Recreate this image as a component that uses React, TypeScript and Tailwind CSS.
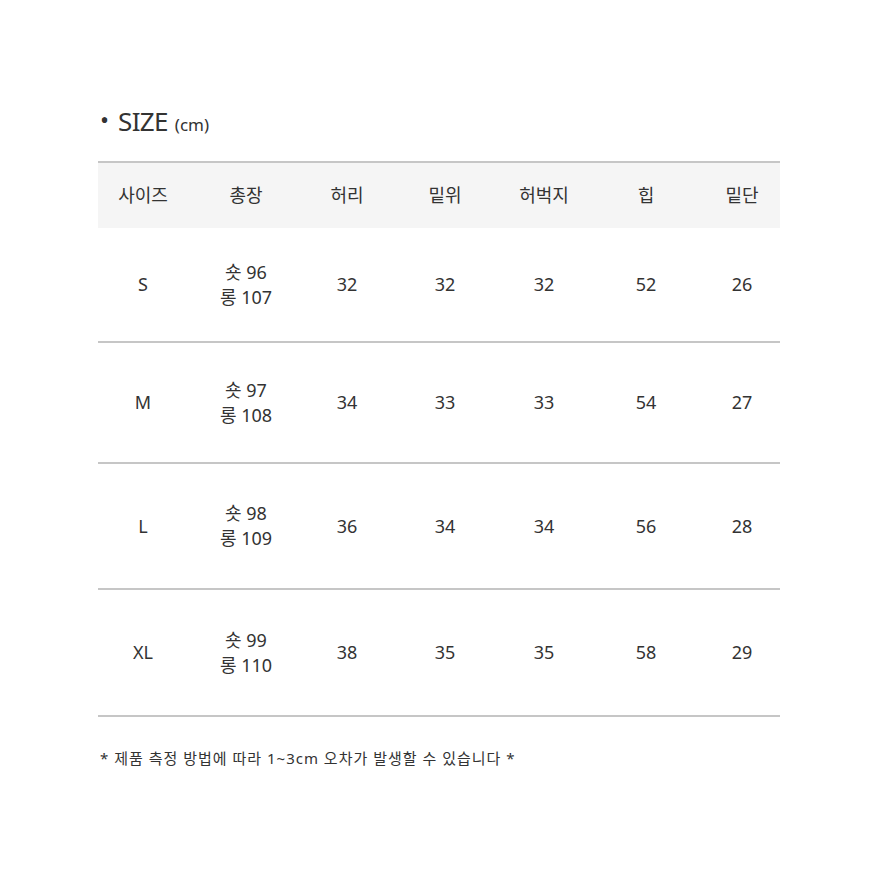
import React from "react";

const headers = ["사이즈", "총장", "허리", "밑위", "허벅지", "힙", "밑단"];

const rows = [
  { size: "S", short: "96", long: "107", vals: ["32", "32", "32", "52", "26"], h: "h-[115px]" },
  { size: "M", short: "97", long: "108", vals: ["34", "33", "33", "54", "27"], h: "h-[121px]" },
  { size: "L", short: "98", long: "109", vals: ["36", "34", "34", "56", "28"], h: "h-[126px]" },
  { size: "XL", short: "99", long: "110", vals: ["38", "35", "35", "58", "29"], h: "h-[127px]" },
];

const cols = "grid grid-cols-[90px_116px_86px_110px_88px_116px_76px]";

export default function App() {
  return (
    <div
      className="w-[884px] h-[884px] bg-white text-[#333] overflow-hidden"
      style={{ fontFamily: '"Noto Sans", "Noto Sans CJK KR", sans-serif' }}
    >
      <div className="pt-[102px] pl-[98px]">
        <h2 className="flex items-baseline h-[40px] pl-[2px]">
          <span className="text-[24px] mr-[9px] relative -top-[2px]">•</span>
          <span className="text-[26px] tracking-tight">SIZE</span>
          <span className="text-[17px] ml-[7px]">(cm)</span>
        </h2>

        <div className="w-[682px] mt-[19px]">
          <div className={`${cols} h-[67px] border-t-2 border-[#c6c6c6] bg-[#f5f5f5] items-center text-[18px]`}>
            {headers.map((h) => (
              <div key={h} className="text-center">
                {h}
              </div>
            ))}
          </div>

          {rows.map((r) => (
            <div
              key={r.size}
              className={`${cols} ${r.h} border-b-2 border-[#c6c6c6] items-center text-[18px]`}
            >
              <div className="text-center">{r.size}</div>
              <div className="text-center leading-[25px]">
                <div>숏 {r.short}</div>
                <div>롱 {r.long}</div>
              </div>
              {r.vals.map((v, i) => (
                <div key={i} className="text-center">
                  {v}
                </div>
              ))}
            </div>
          ))}
        </div>

        <p className="mt-[30px] pl-[2px] text-[15px] tracking-[1px]">
          * 제품 측정 방법에 따라 1~3cm 오차가 발생할 수 있습니다 *
        </p>
      </div>
    </div>
  );
}
